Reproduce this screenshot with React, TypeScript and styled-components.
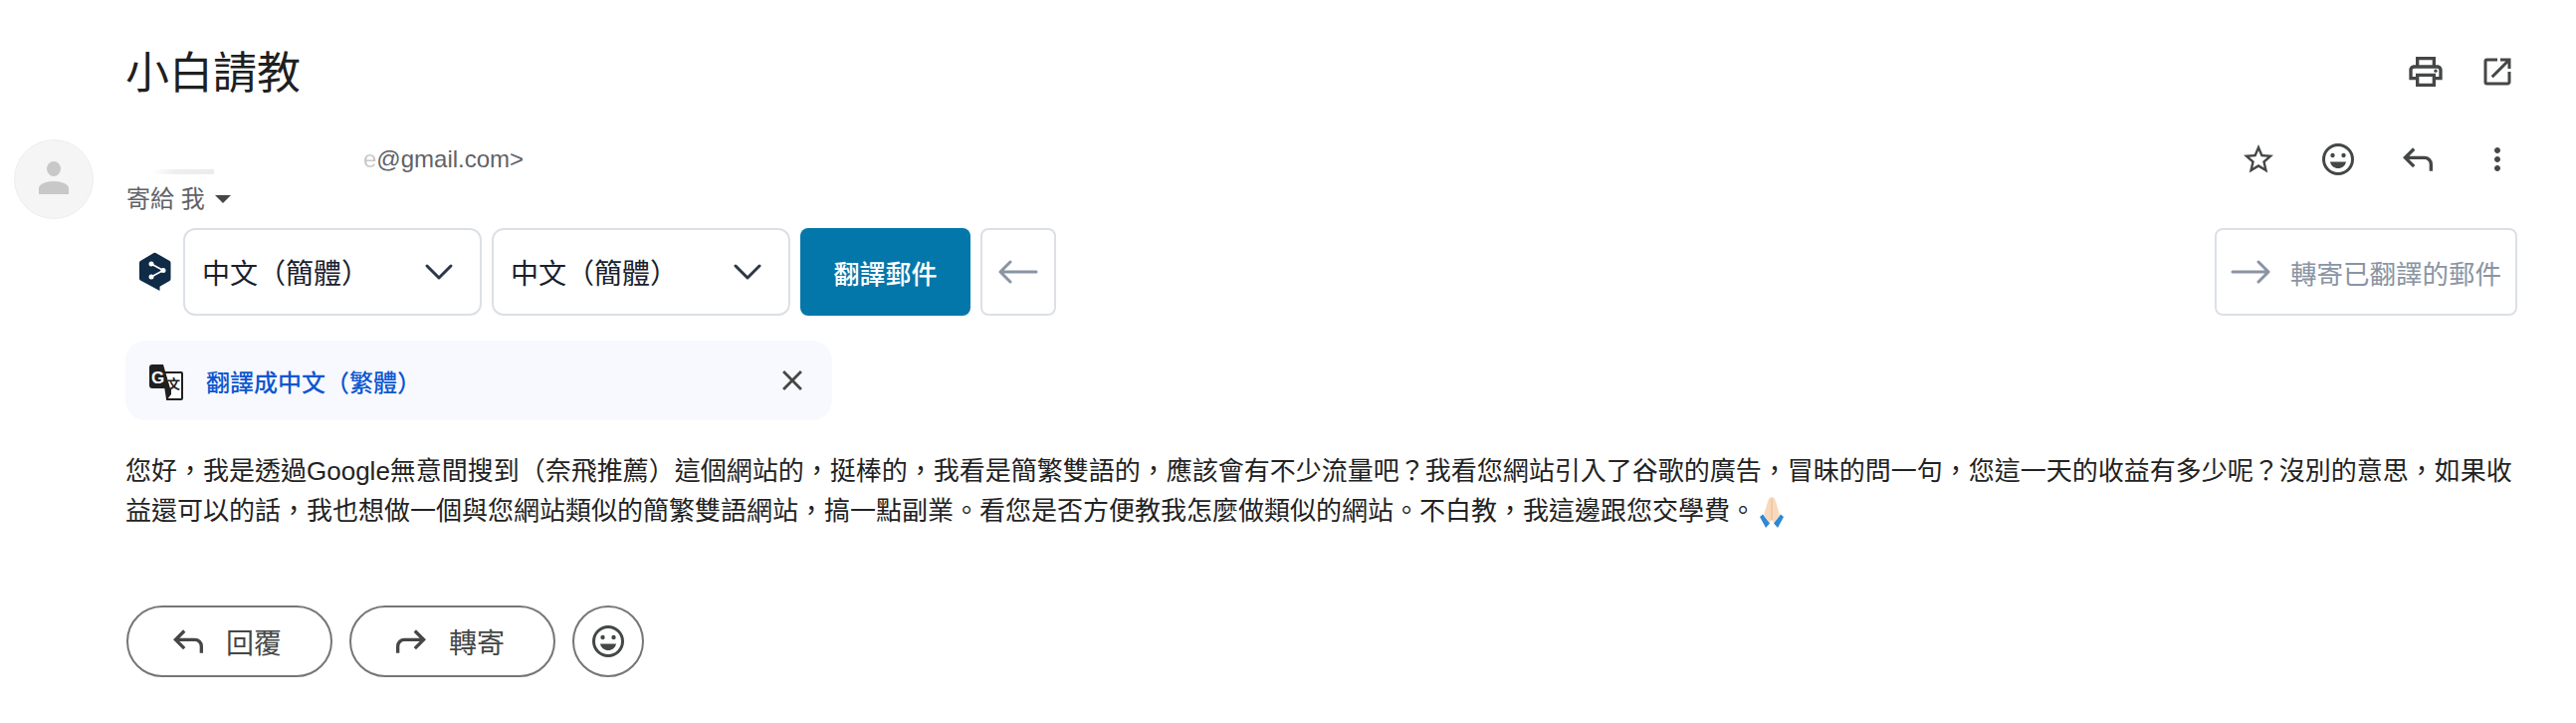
import React from 'react';
import styled, { createGlobalStyle } from 'styled-components';
import { MdClose, MdMoreVert, MdOpenInNew, MdOutlinePrint, MdStarBorder } from 'react-icons/md';

const CJK = `"Liberation Sans", "Noto Sans CJK TC", sans-serif`;

const GlobalStyle = createGlobalStyle`
  html, body {
    margin: 0;
    padding: 0;
    background: #ffffff;
    font-family: ${CJK};
  }
`;

const Page = styled.div`
  width: 2588px;
  height: 726px;
  overflow: hidden;
  box-sizing: border-box;
  padding: 47px 59px 0 14px;
  display: flex;
  flex-direction: column;
`;

const SubjectRow = styled.div`
  display: flex;
  align-items: center;
  justify-content: space-between;
  height: 50px;
  padding-left: 112px;
`;

const Subject = styled.h1`
  margin: 4px 0 0;
  font-size: 44px;
  line-height: 50px;
  font-weight: 400;
  color: #1f1f1f;
`;

const IconGroup = styled.div<{ $gap: number }>`
  display: flex;
  align-items: center;
  gap: ${(p) => p.$gap}px;
  color: #444746;
`;

const IconSlot = styled.span`
  width: 40px;
  height: 40px;
  display: flex;
  align-items: center;
  justify-content: center;
`;

const SenderRow = styled.div`
  display: flex;
  margin-top: 43px;
  gap: 33px;
`;

const Avatar = styled.div`
  width: 80px;
  height: 80px;
  box-sizing: border-box;
  border: 1px solid #eeeeee;
  border-radius: 50%;
  background: #f5f5f5;
  padding-bottom: 4px;
  display: flex;
  align-items: center;
  justify-content: center;
  flex: none;
`;

const SenderInfo = styled.div`
  flex: 1;
  display: flex;
  flex-direction: column;
`;

const SenderTop = styled.div`
  display: flex;
  align-items: center;
  justify-content: space-between;
  height: 40px;
`;

const Email = styled.div`
  position: relative;
  padding-left: 238px;
  font-size: 24px;
  line-height: 40px;
  color: #5f6368;
`;

const FadedLetter = styled.span`
  opacity: 0.35;
`;

const Smudge = styled.span`
  position: absolute;
  left: 0;
  top: 30px;
  width: 88px;
  height: 5px;
  background: linear-gradient(90deg, #ffffff 30%, #eeeeee 55%, #ececec 100%);
  filter: blur(0.6px);
`;

const Recipient = styled.div`
  display: flex;
  align-items: center;
  gap: 10px;
  font-size: 24px;
  line-height: 36px;
  margin-top: 2px;
  color: #5f6368;
`;

const Caret = styled.span`
  width: 0;
  height: 0;
  border-left: 8px solid transparent;
  border-right: 8px solid transparent;
  border-top: 8px solid #444746;
`;

const Toolbar = styled.div`
  display: flex;
  align-items: center;
  margin-top: 9px;
  padding-left: 125px;
  height: 88px;
`;

const Logo = styled.svg`
  width: 34px;
  height: 40px;
  flex: none;
  margin-right: 11px;
`;

const LangSelect = styled.div`
  width: 300px;
  height: 88px;
  box-sizing: border-box;
  margin-right: 10px;
  border: 2px solid #dce0e6;
  border-radius: 12px;
  padding: 0 26px 0 17px;
  display: flex;
  align-items: center;
  justify-content: space-between;
  font-size: 28px;
  color: #1a202c;
`;

const TranslateButton = styled.div`
  width: 171px;
  height: 88px;
  border-radius: 8px;
  background: #0477aa;
  color: #ffffff;
  font-size: 26px;
  font-weight: 500;
  display: flex;
  align-items: center;
  justify-content: center;
`;

const OutlineButton = styled.div<{ $wide?: boolean }>`
  height: 88px;
  box-sizing: border-box;
  border: 2px solid #dce0e6;
  border-radius: 8px;
  display: flex;
  align-items: center;
  justify-content: center;
  gap: 20px;
  width: ${(p) => (p.$wide ? 304 : 76)}px;
  margin-left: ${(p) => (p.$wide ? 'auto' : '10px')};
  color: #8a94a3;
  font-size: 26.500px;
`;

const Banner = styled.div`
  width: 710px;
  height: 80px;
  box-sizing: border-box;
  margin: 25px 0 0 112px;
  padding: 0 23px 0 24px;
  border-radius: 20px;
  background: #f8f9fe;
  display: flex;
  align-items: center;
`;

const BannerIcon = styled.svg`
  width: 34px;
  height: 36px;
  flex: none;
  margin-top: 3px;
`;

const BannerText = styled.span`
  font-size: 24px;
  font-weight: 500;
  color: #0b57d0;
  margin-left: 23px;
  flex: 1;
`;

const Body = styled.p`
  margin: 31px 0 0 112px;
  font-size: 26px;
  line-height: 40px;
  color: #222222;
`;

const Emoji = styled.svg`
  width: 28px;
  height: 33px;
  vertical-align: -9px;
  margin-left: 2px;
`;

const Actions = styled.div`
  display: flex;
  gap: 17px;
  margin: 75px 0 0 113px;
`;

const PillButton = styled.div`
  width: 207px;
  height: 72px;
  box-sizing: border-box;
  border: 2px solid #747775;
  border-radius: 36px;
  padding-left: 40px;
  display: flex;
  align-items: center;
  gap: 18px;
  color: #444746;
  font-size: 28px;
`;

const RoundButton = styled.div`
  width: 72px;
  height: 72px;
  box-sizing: border-box;
  border: 2px solid #747775;
  border-radius: 50%;
  display: flex;
  align-items: center;
  justify-content: center;
  color: #444746;
`;

const ReplyIcon = ({ size = 40, flip = false }: { size?: number; flip?: boolean }) => (
  <svg width={size} height={size} viewBox="0 -960 960 960" fill="currentColor" style={flip ? { transform: 'scaleX(-1)' } : undefined}>
    <path d="M760-200v-160q0-50-35-85t-85-35H273l144 144-56 56-240-240 240-240 56 56-144 144h367q83 0 141.500 58.500T840-360v160h-80Z" />
  </svg>
);

const SmileIcon = ({ size = 40 }: { size?: number }) => (
  <svg width={size} height={size} viewBox="0 0 40 40" fill="none">
    <circle cx="20" cy="20" r="14.500" stroke="currentColor" strokeWidth="3" />
    <circle cx="14.500" cy="16" r="2.200" fill="currentColor" />
    <circle cx="25.500" cy="16" r="2.200" fill="currentColor" />
    <path d="M12 22.500h16c-.8 4-4 6.500-8 6.500s-7.200-2.500-8-6.500z" fill="currentColor" />
  </svg>
);

const Chevron = () => (
  <svg width="30" height="18" viewBox="0 0 30 18" fill="none" stroke="#2d3748" strokeWidth="3" strokeLinecap="round" strokeLinejoin="round">
    <path d="M3 3l12 12L27 3" />
  </svg>
);

const LongArrow = ({ flip = false }: { flip?: boolean }) => (
  <svg width="40" height="26" viewBox="0 0 40 26" fill="none" stroke="#8a94a3" strokeWidth="3" strokeLinecap="round" strokeLinejoin="round" style={flip ? { transform: 'scaleX(-1)' } : undefined}>
    <path d="M2 13h36M12 3L2 13l10 10" />
  </svg>
);

const DeepLLogo = () => (
  <Logo viewBox="0 0 34 40">
    <path d="M15.500 1a2 2 0 0 1 2 0l14 8a2 2 0 0 1 1 1.700v16.600a2 2 0 0 1-1 1.700l-10 5.800V39L2 28.500a2 2 0 0 1-1-1.700V10.700a2 2 0 0 1 1-1.700z" fill="#0f2b46" />
    <path d="M13 12l12 6.500L13 25" fill="none" stroke="#ffffff" strokeWidth="1.600" />
    <circle cx="13" cy="12" r="2.500" fill="#fff" />
    <circle cx="25" cy="18.500" r="2.500" fill="#fff" />
    <circle cx="13" cy="25" r="2.500" fill="#fff" />
  </Logo>
);

const TranslateIcon = () => (
  <BannerIcon viewBox="0 0 34 36">
    <path d="M14 8h18a1 1 0 0 1 1 1v25a1 1 0 0 1-1 1H18z" fill="#ffffff" stroke="#202020" strokeWidth="2" />
    <path d="M3 0h11l7 24H3a3 3 0 0 1-3-3V3a3 3 0 0 1 3-3z" fill="#202020" />
    <path d="M16 24h6v6l-4 5z" fill="#202020" />
    <text x="2" y="19" fontSize="17" fontWeight="700" fill="#ffffff" fontFamily="Liberation Sans, sans-serif">G</text>
    <text x="18" y="24" fontSize="13" fontWeight="700" fill="#202020" fontFamily="Noto Sans CJK TC, sans-serif">文</text>
  </BannerIcon>
);

const PersonIcon = () => (
  <svg width="30" height="33" viewBox="0 0 30 33" fill="#c8c8c8">
    <ellipse cx="15" cy="7.500" rx="7" ry="7.500" />
    <path d="M0 33v-6c0-4 7-7 15-7s15 3 15 7v6z" />
  </svg>
);

const PrayEmoji = () => (
  <Emoji viewBox="0 0 28 33">
    <path d="M14 1c-1.500 0-2.500 1-3.500 3L6 19l6 8 2-3 2 3 6-8-4.500-15c-1-2-2-3-3.500-3z" fill="#f8d9bb" />
    <path d="M14 3v21" stroke="#eabf97" strokeWidth="1.200" />
    <path d="M2 21l3-2.500 7 9-4 4.500zM26 21l-3-2.500-7 9 4 4.500z" fill="#2f88d2" />
  </Emoji>
);

export default function App() {
  return (
    <>
      <GlobalStyle />
      <Page>
        <SubjectRow>
          <Subject>小白請教</Subject>
          <IconGroup $gap={32}>
            <IconSlot><MdOutlinePrint size={40} /></IconSlot>
            <IconSlot><MdOpenInNew size={36} /></IconSlot>
          </IconGroup>
        </SubjectRow>

        <SenderRow>
          <Avatar>
            <PersonIcon />
          </Avatar>
          <SenderInfo>
            <SenderTop>
              <Email>
                <Smudge />
                <FadedLetter>e</FadedLetter>@gmail.com&gt;
              </Email>
              <IconGroup $gap={40}>
                <IconSlot><MdStarBorder size={36} /></IconSlot>
                <IconSlot><SmileIcon size={40} /></IconSlot>
                <IconSlot><ReplyIcon size={40} /></IconSlot>
                <IconSlot><MdMoreVert size={36} /></IconSlot>
              </IconGroup>
            </SenderTop>
            <Recipient>
              寄給 我
              <Caret />
            </Recipient>
          </SenderInfo>
        </SenderRow>

        <Toolbar>
          <DeepLLogo />
          <LangSelect>
            中文（簡體）
            <Chevron />
          </LangSelect>
          <LangSelect>
            中文（簡體）
            <Chevron />
          </LangSelect>
          <TranslateButton>翻譯郵件</TranslateButton>
          <OutlineButton>
            <LongArrow />
          </OutlineButton>
          <OutlineButton $wide>
            <LongArrow flip />
            轉寄已翻譯的郵件
          </OutlineButton>
        </Toolbar>

        <Banner>
          <TranslateIcon />
          <BannerText>翻譯成中文（繁體）</BannerText>
          <MdClose size={34} color="#444746" />
        </Banner>

        <Body>
          您好，我是透過Google無意間搜到（奈飛推薦）這個網站的，挺棒的，我看是簡繁雙語的，應該會有不少流量吧？我看您網站引入了谷歌的廣告，冒昧的問一句，您這一天的收益有多少呢？沒別的意思，如果收益還可以的話，我也想做一個與您網站類似的簡繁雙語網站，搞一點副業。看您是否方便教我怎麼做類似的網站。不白教，我這邊跟您交學費。
          <PrayEmoji />
        </Body>

        <Actions>
          <PillButton>
            <ReplyIcon size={40} />
            回覆
          </PillButton>
          <PillButton>
            <ReplyIcon size={40} flip />
            轉寄
          </PillButton>
          <RoundButton>
            <SmileIcon size={40} />
          </RoundButton>
        </Actions>
      </Page>
    </>
  );
}
